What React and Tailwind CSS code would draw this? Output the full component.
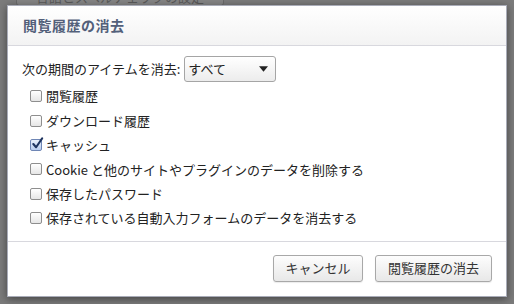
import { useState } from "react";

const items = [
  { label: "閲覧履歴", checked: false },
  { label: "ダウンロード履歴", checked: false },
  { label: "キャッシュ", checked: true },
  { label: "Cookie と他のサイトやプラグインのデータを削除する", checked: false },
  { label: "保存したパスワード", checked: false },
  { label: "保存されている自動入力フォームのデータを消去する", checked: false },
];

function Box({ checked, onClick }) {
  return (
    <button
      type="button"
      onClick={onClick}
      className={
        "relative w-[12px] h-[12px] shrink-0 rounded-[2px] border bg-gradient-to-b " +
        (checked ? "border-[#6f86b5] from-[#e9f0fb] to-[#b9cdef]" : "border-[#8e8e8e] from-[#ffffff] to-[#e6e6e6]")
      }
    >
      {checked && (
        <svg viewBox="0 0 14 14" className="absolute left-[0px] top-[-3px] w-[13px] h-[13px]">
          <path d="M2.5 7.5 L5.5 11 L12 1.5" fill="none" stroke="#1f3560" strokeWidth="2.2" strokeLinecap="round" strokeLinejoin="round" />
        </svg>
      )}
    </button>
  );
}

export default function App() {
  const [state, setState] = useState(items.map((i) => i.checked));

  const toggle = (idx) => setState((s) => s.map((v, i) => (i === idx ? !v : v)));

  return (
    <div
      className="w-[514px] h-[304px] bg-[#7b7b7b] overflow-hidden relative"
      style={{ fontFamily: '"Noto Sans CJK JP", "Noto Sans", sans-serif' }}
    >
      {/* faint page behind the overlay */}
      <div className="absolute left-[16px] top-[-20px] w-[208px] h-[26px] border border-[#6a6a6a] rounded-[3px] bg-[#858585] flex items-end justify-center text-[13px] leading-[16px] text-[#5a5a5a]">
        言語とスペルチェックの設定
      </div>

      <div className="absolute left-[7px] top-[5px] w-[500px] h-[292px] bg-white border border-[#a9acb8] shadow-[0_2px_8px_rgba(0,0,0,0.45)] flex flex-col">
        {/* HEADER */}
        <div className="h-[40px] shrink-0 bg-gradient-to-b from-[#ffffff] to-[#f3f3f3] border-b border-[#d8d8de] flex items-center px-[15px]">
          <h1 className="text-[14px] font-bold text-[#53607a] tracking-[0.5px]">閲覧履歴の消去</h1>
        </div>

        {/* BODY */}
        <div className="flex-1 px-[14px] pt-[10px] text-[13px] text-[#222]">
          <div className="flex items-center gap-[2px]">
            <span>次の期間のアイテムを消去:</span>
            <div className="ml-[2px] w-[92px] h-[26px] rounded-[3px] border border-[#a5a5a5] bg-gradient-to-b from-[#ffffff] to-[#ececec] flex items-center justify-between pl-[3px] pr-[7px]">
              <span>すべて</span>
              <svg viewBox="0 0 10 6" className="w-[9px] h-[6px]">
                <path d="M0 0 L10 0 L5 6 Z" fill="#222" />
              </svg>
            </div>
          </div>

          <div className="mt-[2px] pl-[8px] flex flex-col">
            {items.map((it, i) => (
              <label key={i} className="h-[24.4px] flex items-center gap-[4px] cursor-default">
                <Box checked={state[i]} onClick={() => toggle(i)} />
                <span>{it.label}</span>
              </label>
            ))}
          </div>
        </div>

        {/* FOOTER */}
        <div className="h-[55px] shrink-0 border-t border-[#d8d8de] flex items-center justify-end gap-[12px] pr-[14px] pb-[2px]">
          <button className="w-[90px] h-[27px] rounded-[3px] border border-[#a8a8a8] bg-gradient-to-b from-[#fdfdfd] to-[#e8e8e8] shadow-[0_1px_1px_rgba(0,0,0,0.08)] text-[13px] text-[#333]">
            キャンセル
          </button>
          <button className="w-[117px] h-[27px] rounded-[3px] border border-[#a8a8a8] bg-gradient-to-b from-[#fdfdfd] to-[#e8e8e8] shadow-[0_1px_1px_rgba(0,0,0,0.08)] text-[13px] text-[#333]">
            閲覧履歴の消去
          </button>
        </div>
      </div>
    </div>
  );
}
